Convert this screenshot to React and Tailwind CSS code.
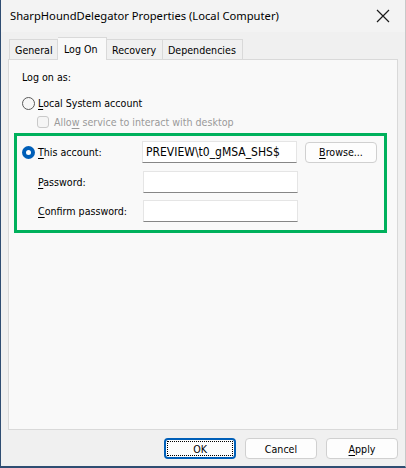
import React from "react";

const bodyFont = { fontFamily: '"DejaVu Sans Condensed", "DejaVu Sans", "Liberation Sans", sans-serif' };
const titleFont = { fontFamily: '"Noto Sans", "Open Sans", sans-serif' };

function U({ children }) {
  return <span className="underline underline-offset-[2px] decoration-[1px]">{children}</span>;
}

function Radio({ checked }) {
  if (checked) {
    return (
      <span className="w-[13px] h-[13px] rounded-full bg-[#005fb8] flex items-center justify-center shrink-0">
        <span className="w-[5px] h-[5px] rounded-full bg-white" />
      </span>
    );
  }
  return <span className="w-[13px] h-[13px] rounded-full border border-[#5a5a5a] bg-[#f7f7f7] shrink-0" />;
}

function TextBox({ value }) {
  return (
    <div className="w-[155px] h-[22px] bg-white border border-[#e5e5e5] border-b-[#868686] flex items-center px-[3px] text-[12px] text-black whitespace-nowrap">
      {value}
    </div>
  );
}

function Button({ children, focused }) {
  return (
    <div
      className={
        "w-[72px] h-[21px] rounded-[4px] bg-[#fdfdfd] flex items-center justify-center text-[10.6px] text-black " +
        (focused ? "border-2 border-[#005fb8]" : "border border-[#d0d0d0]")
      }
    >
      {focused ? (
        <span className="w-[66px] h-[15px] border border-dotted border-black flex items-center justify-center">{children}</span>
      ) : (
        children
      )}
    </div>
  );
}

export default function App() {
  return (
    <div className="w-[406px] h-[468px] bg-[#f0f0f0] border-l border-l-[#2f4d72] border-b-2 border-b-[#2f4d72] border-r border-r-[#c8c8c8] flex flex-col leading-[16px] font-stretch-condensed" style={bodyFont}>
      {/* title bar */}
      <div className="h-[32px] bg-[#f3f3f3] flex items-center justify-between pl-[9px] pr-[15px] text-[11.2px] text-black whitespace-nowrap font-stretch-normal" style={titleFont}>
        <span>SharpHoundDelegator Properties (Local Computer)</span>
        <svg width="14" height="14" viewBox="0 0 14 14">
          <path d="M1 1 L13 13 M13 1 L1 13" stroke="#1a1a1a" strokeWidth="1.2" />
        </svg>
      </div>

      {/* tabs */}
      <div className="flex items-end pl-[8px] mt-[6px] h-[21px] text-[10.6px] text-black whitespace-nowrap">
        <div className="h-[20px] pl-[5px] border border-[#d9d9d9] border-b-0 bg-[#f0f0f0] flex items-center w-[49px]">General</div>
        <div className="h-[23px] pl-[6px] border border-l-0 border-[#d9d9d9] border-b-0 bg-[#f9f9f9] flex items-start pt-[3px] w-[49px] relative z-10 -mb-px">Log On</div>
        <div className="h-[20px] pl-[5px] border border-l-0 border-[#d9d9d9] border-b-0 bg-[#f0f0f0] flex items-center w-[56px]">Recovery</div>
        <div className="h-[20px] pl-[5px] border border-l-0 border-[#d9d9d9] border-b-0 bg-[#f0f0f0] flex items-center w-[80px]">Dependencies</div>
      </div>

      {/* tab panel */}
      <div className="mx-[7px] h-[371px] bg-[#f9f9f9] border border-[#d9d9d9] text-[10.6px] text-black flex flex-col pt-[9px] pl-[13px] whitespace-nowrap">
        <div>Log on as:</div>
        <div className="flex items-center gap-[3px] mt-[10px]">
          <Radio />
          <span><U>L</U>ocal System account</span>
        </div>
        <div className="flex items-center gap-[5px] mt-[3px] pl-[15px] text-[#9a9a9a]">
          <span className="w-[12px] h-[12px] rounded-[3px] border border-[#c9c9c9] bg-[#f5f5f5]" />
          <span>Allo<U>w</U> service to interact with desktop</span>
        </div>

        <div className="mt-[3px] -ml-[8px] w-[373px] h-[100px] border-[3px] border-[#00b15c] flex flex-col pl-[5px] pt-[5px]">
          <div className="flex items-center">
            <div className="flex items-center gap-[3px] w-[120px]">
              <Radio checked />
              <span><U>T</U>his account:</span>
            </div>
            <TextBox value={"PREVIEW\\t0_gMSA_SHS$"} />
            <div className="ml-[8px]">
              <Button><span><U>B</U>rowse...</span></Button>
            </div>
          </div>
          <div className="flex items-center mt-[8px]">
            <span className="w-[121px] pl-[16px]"><U>P</U>assword:</span>
            <TextBox />
          </div>
          <div className="flex items-center mt-[7px]">
            <span className="w-[121px] pl-[16px]"><U>C</U>onfirm password:</span>
            <TextBox />
          </div>
        </div>
      </div>

      {/* dialog buttons */}
      <div className="flex justify-end gap-[9px] pr-[7px] mt-[8px]">
        <Button focused>OK</Button>
        <Button>Cancel</Button>
        <Button><span><U>A</U>pply</span></Button>
      </div>
    </div>
  );
}
